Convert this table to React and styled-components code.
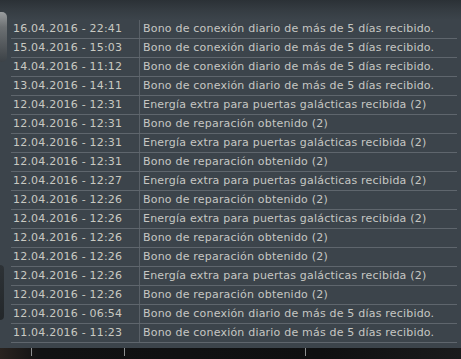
import React from "react";
import styled, { createGlobalStyle } from "styled-components";

// -------------------------------------------------------------------------
// Données

const entries = [
  ["16.04.2016 - 22:41", "Bono de conexión diario de más de 5 días recibido."],
  ["15.04.2016 - 15:03", "Bono de conexión diario de más de 5 días recibido."],
  ["14.04.2016 - 11:12", "Bono de conexión diario de más de 5 días recibido."],
  ["13.04.2016 - 14:11", "Bono de conexión diario de más de 5 días recibido."],
  ["12.04.2016 - 12:31", "Energía extra para puertas galácticas recibida (2)"],
  ["12.04.2016 - 12:31", "Bono de reparación obtenido (2)"],
  ["12.04.2016 - 12:31", "Energía extra para puertas galácticas recibida (2)"],
  ["12.04.2016 - 12:31", "Bono de reparación obtenido (2)"],
  ["12.04.2016 - 12:27", "Energía extra para puertas galácticas recibida (2)"],
  ["12.04.2016 - 12:26", "Bono de reparación obtenido (2)"],
  ["12.04.2016 - 12:26", "Energía extra para puertas galácticas recibida (2)"],
  ["12.04.2016 - 12:26", "Bono de reparación obtenido (2)"],
  ["12.04.2016 - 12:26", "Bono de reparación obtenido (2)"],
  ["12.04.2016 - 12:26", "Energía extra para puertas galácticas recibida (2)"],
  ["12.04.2016 - 12:26", "Bono de reparación obtenido (2)"],
  ["12.04.2016 - 06:54", "Bono de conexión diario de más de 5 días recibido."],
  ["11.04.2016 - 11:23", "Bono de conexión diario de más de 5 días recibido."],
];

// -------------------------------------------------------------------------
// Styles

const GlobalStyle = createGlobalStyle`
  html, body {
    margin: 0;
    padding: 0;
    background: #3c444b;
  }
`;

const Panel = styled.div`
  width: 461px;
  height: 359px;
  overflow: hidden;
  display: flex;
  flex-direction: column;
  background: linear-gradient(to bottom, #2b3136 0px, #353c42 10px, #3c444b 20px, #3c444b 100%);
  font-family: "DejaVu Sans", Verdana, sans-serif;
  font-size: 11px;
  letter-spacing: 0.2px;
  color: #c6c7c3;
`;

const Body = styled.div`
  display: flex;
  flex: 1;
`;

const Rail = styled.div`
  width: 11px;
  display: flex;
  flex-direction: column;
`;

const Knob = styled.div`
  width: ${(p) => p.$w}px;
  height: ${(p) => p.$h}px;
  margin-top: ${(p) => p.$top}px;
  border-radius: 0 5px 5px 0;
  background: ${(p) => p.$bg};
`;

const List = styled.div`
  flex: 1;
  margin-top: 20px;
  margin-right: 4px;
  display: flex;
  flex-direction: column;
`;

const Row = styled.div`
  display: grid;
  grid-template-columns: 129px 1fr;
  height: 18px;
  border-bottom: 1px solid #5f666d;
  line-height: 18px;
  white-space: nowrap;
`;

const DateCell = styled.div`
  padding-left: 2px;
  border-right: 1px solid #596067;
  color: #c9c9c2;
`;

const MessageCell = styled.div`
  padding-left: 3px;
  overflow: hidden;
`;

const Footer = styled.div`
  height: 11px;
  display: flex;
  background: linear-gradient(to right, #2a2420, #111213 40px, #0f1011 70%, #1a1b1c);
`;

const Tick = styled.div`
  width: 1px;
  height: 8px;
  margin-left: ${(p) => p.$left}px;
  background: #8d8f90;
`;

export default function App() {
  return (
    <>
      <GlobalStyle />
      <Panel>
        <Body>
          <Rail>
            <Knob
              $w={7}
              $h={50}
              $top={12}
              $bg="linear-gradient(to bottom, #9a9d9f, #6c7073 30%, #4a4f53 80%, #3c4247)"
            />
            <Knob
              $w={4}
              $h={55}
              $top={203}
              $bg="linear-gradient(to bottom, #2d3236, #23272a)"
            />
          </Rail>
          <List>
            {entries.map(([date, msg], i) => (
              <Row key={i}>
                <DateCell>{date}</DateCell>
                <MessageCell>{msg}</MessageCell>
              </Row>
            ))}
          </List>
        </Body>
        <Footer>
          <Tick $left={31} />
          <Tick $left={92} />
          <Tick $left={180} />
        </Footer>
      </Panel>
    </>
  );
}
